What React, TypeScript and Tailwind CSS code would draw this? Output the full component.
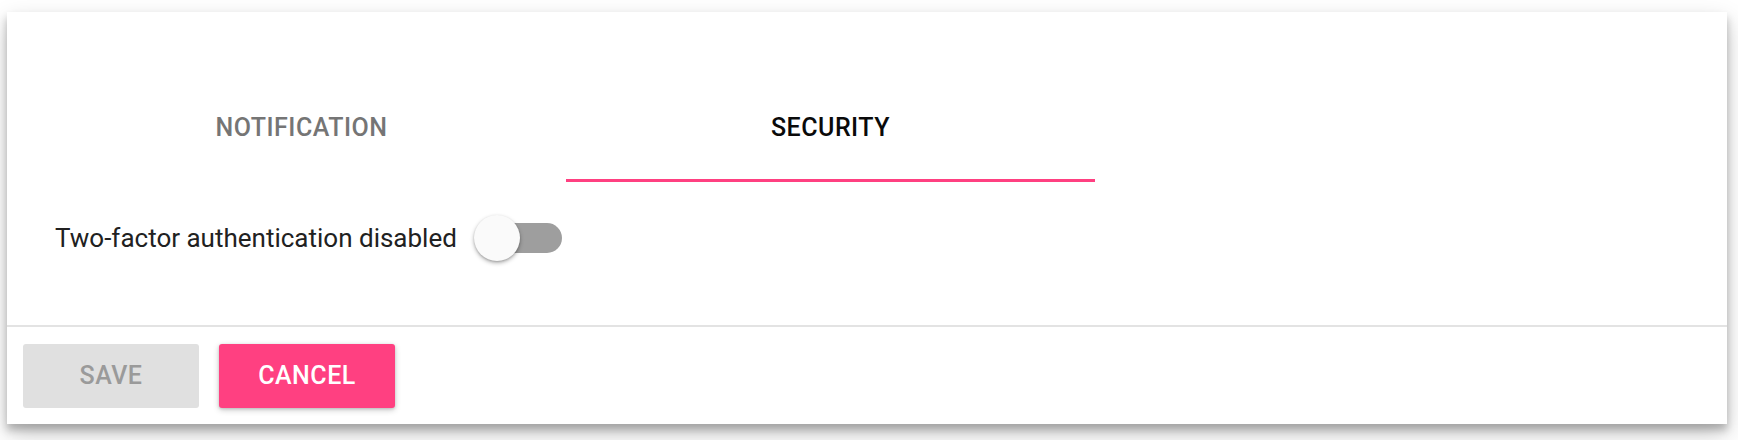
import React from "react";

export default function App() {
  return (
    <div className="w-[1738px] h-[440px] bg-white pt-[12px] pl-[7px] overflow-hidden" style={{ fontFamily: "Roboto, 'Noto Sans', sans-serif" }}>
      <div className="w-[1720px] h-[412px] bg-white flex flex-col shadow-[0_10px_24px_rgba(0,0,0,0.2),0_6px_8px_rgba(0,0,0,0.24)]">
        <div className="flex-1 flex flex-col">
          <div className="flex pl-[30px] pt-[64px]">
            <div className="w-[529px] flex flex-col">
              <div className="h-[103px] flex items-center justify-center text-[25px] font-medium uppercase tracking-[0.02em] text-[#757575]">
                Notification
              </div>
              <div className="h-[3px] bg-transparent" />
            </div>
            <div className="w-[529px] flex flex-col">
              <div className="h-[103px] flex items-center justify-center text-[25px] font-medium uppercase tracking-[0.02em] text-[#0a0a0a]">
                Security
              </div>
              <div className="h-[3px] bg-[#ff4081]" />
            </div>
          </div>
          <div className="mt-[32px] h-[48px] pl-[48px] flex items-center">
            <span className="text-[26px] text-[#212121]">Two-factor authentication disabled</span>
            <div className="relative ml-[17px] w-[88px] h-[48px]">
              <div className="absolute left-[13px] right-0 top-[9px] h-[30px] rounded-full bg-[#9e9e9e]" />
              <div className="absolute left-0 top-[1px] w-[46px] h-[46px] rounded-full bg-[#fafafa] shadow-[0_2px_4px_rgba(0,0,0,0.3),0_1px_2px_rgba(0,0,0,0.15)]" />
            </div>
          </div>
        </div>
        <div className="h-[2px] bg-[#e3e3e3]" />
        <div className="flex gap-[20px] px-[16px] pt-[17px] pb-[16px]">
          <button className="w-[176px] h-[64px] rounded-[3px] bg-[#e0e0e0] text-[25px] font-medium uppercase tracking-[0.02em] text-[#9a9a9a]">
            Save
          </button>
          <button className="w-[176px] h-[64px] rounded-[3px] bg-[#ff4081] text-[25px] font-medium uppercase tracking-[0.02em] text-white shadow-[0_2px_6px_rgba(0,0,0,0.2),0_1px_3px_rgba(0,0,0,0.15)]">
            Cancel
          </button>
        </div>
      </div>
    </div>
  );
}
